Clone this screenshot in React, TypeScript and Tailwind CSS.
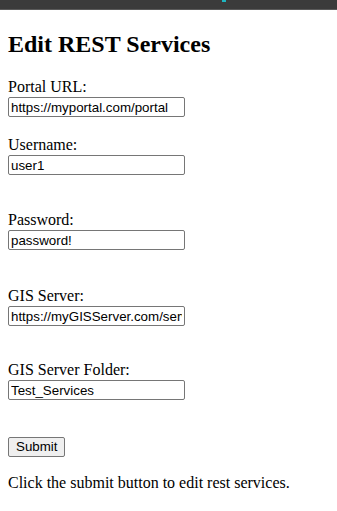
import React from "react";

const fields = [
  { label: "Portal URL:", value: "https://myportal.com/portal", gap: "mt-[20px]" },
  { label: "Username:", value: "user1", gap: "mt-[19px]" },
  { label: "Password:", value: "password!", gap: "mt-[36px]" },
  { label: "GIS Server:", value: "https://myGISServer.com/server", gap: "mt-[37px]" },
  { label: "GIS Server Folder:", value: "Test_Services", gap: "mt-[35px]" },
];

const App: React.FC = () => {
  return (
    <div className="min-h-[511px] bg-white text-black font-['Liberation_Serif',serif] text-[16px]">
      <div className="relative h-[10px] bg-[#3b3b3b] border-b border-[#5a5a5a]">
        <div className="absolute left-[222px] top-0 h-[2px] w-[4px] bg-[#1fb5c0]" />
      </div>
      <div className="px-[8px]">
        <h2 className="mt-[21px] text-[24px] leading-[27px] font-bold">Edit REST Services</h2>
        <form className="flex flex-col items-start" onSubmit={(e) => e.preventDefault()}>
          {fields.map((f) => (
            <div key={f.label} className={`${f.gap} flex flex-col items-start`}>
              <label className="leading-[18px]">{f.label}</label>
              <input
                readOnly
                defaultValue={f.value}
                className="mt-[1px] w-[177px] h-[20px] px-[2px] border border-[#767676] rounded-[2px] bg-white text-[13.33px] font-['Liberation_Sans',Arial,sans-serif] outline-none"
              />
            </div>
          ))}
          <button
            type="submit"
            className="mt-[37px] h-[20px] px-[7px] border border-[#767676] rounded-[2px] bg-[#efefef] text-[13.33px] leading-[16px] font-['Liberation_Sans',Arial,sans-serif]"
          >
            Submit
          </button>
        </form>
        <p className="mt-[17px] leading-[18px]">Click the submit button to edit rest services.</p>
      </div>
    </div>
  );
};

export default App;
